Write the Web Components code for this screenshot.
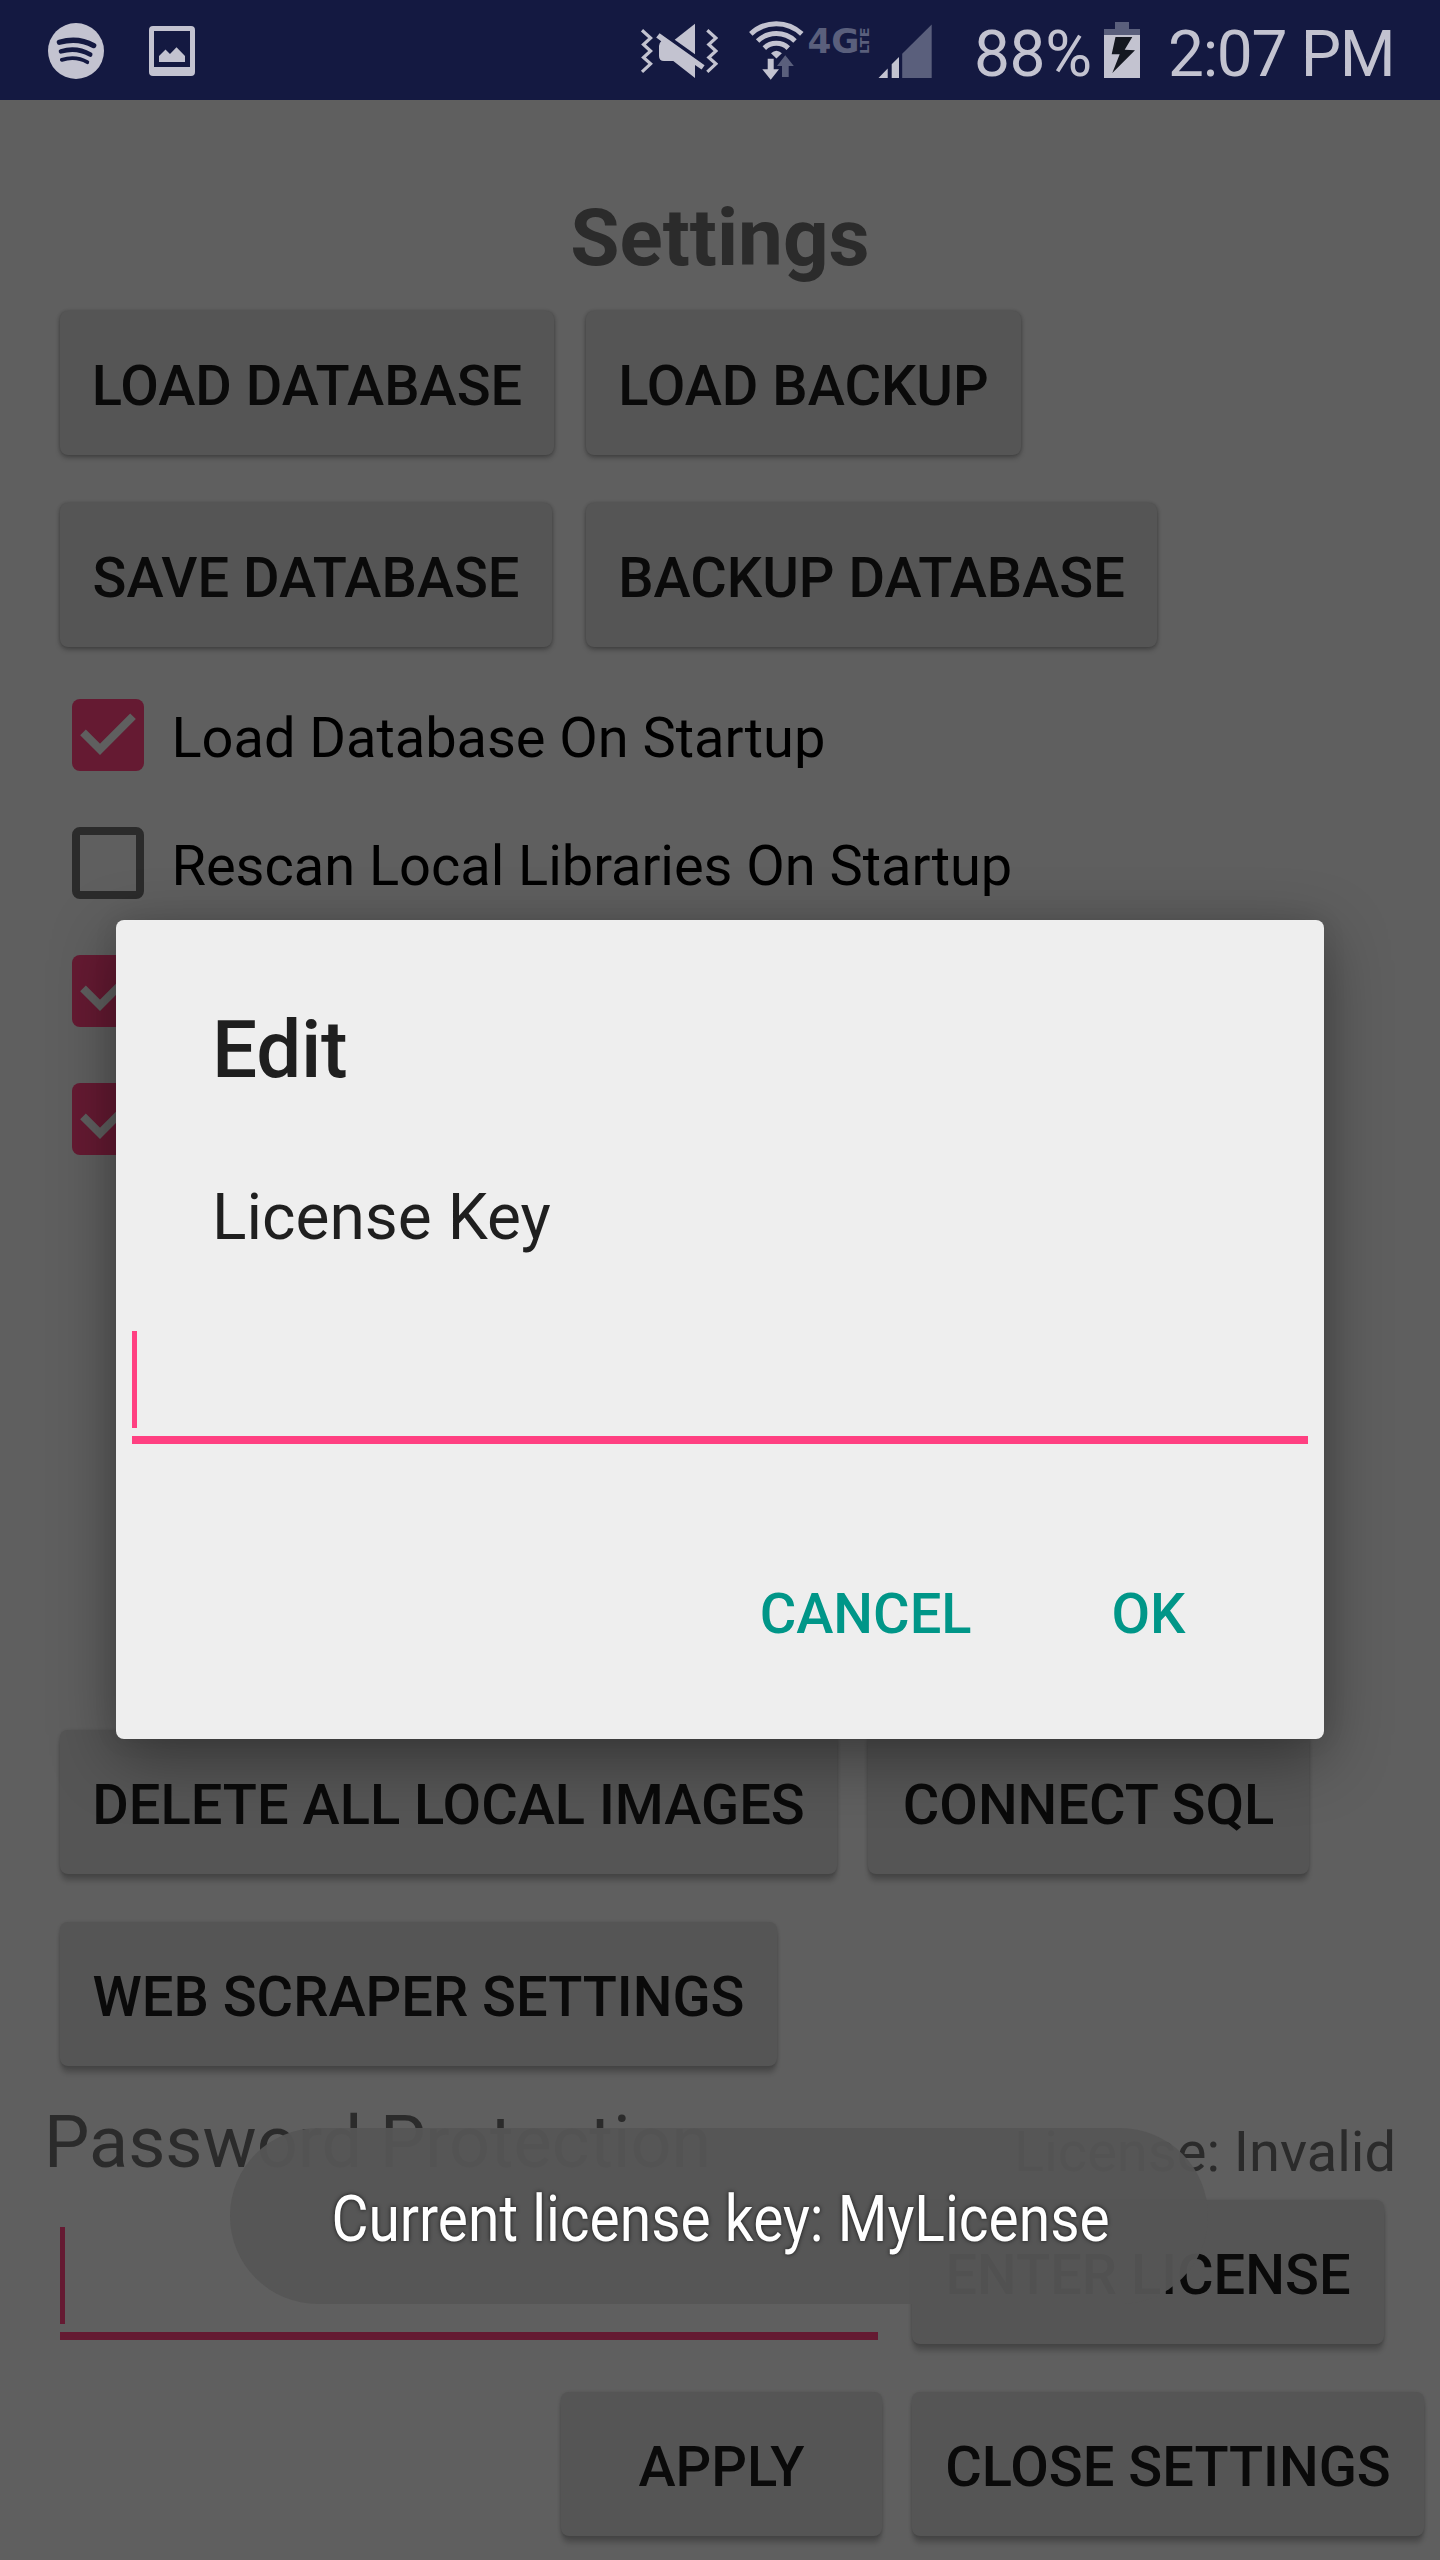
<!DOCTYPE html>
<html lang="en">
<head>
<meta charset="utf-8">
<title>Settings</title>
<style>
html,body{margin:0;padding:0}
body{width:1440px;height:2560px;overflow:hidden;font-family:Roboto,"Noto Sans",sans-serif;background:#5f5f5f}
</style>
</head>
<body>
<settings-app></settings-app>
<script>
function define(name, html) {
  const t = document.createElement('template');
  t.innerHTML = html;
  customElements.define(name, class extends HTMLElement {
    constructor() {
      super();
      this.attachShadow({ mode: 'open' }).append(t.content.cloneNode(true));
    }
  });
}

define('status-bar', `
<style>
:host{display:flex;align-items:flex-start;height:100px;background:#141941;color:#c3c3d0;font-size:64px;line-height:100px;white-space:nowrap}
svg{display:block;flex:none;height:100px}
.left{display:flex;flex:1}
.right{display:flex}
.t{font-weight:400;height:100px;line-height:109px;flex:none}
.pct{width:127px;margin-left:32px;letter-spacing:-.4px}
.time{margin-left:27px;width:272px;letter-spacing:-1.3px}
</style>
<div class="left">
<svg width="149" viewBox="0 0 149 100"><circle cx="76" cy="51" r="28" fill="#c3c3d0"/><g fill="none" stroke="#141941" stroke-linecap="round"><path stroke-width="5.3" d="M59.4 42.3Q78 37 93.7 45.6"/><path stroke-width="4.6" d="M61 51.4Q76.5 46.7 90.2 54.6"/><path stroke-width="3.8" d="M61.8 59.8Q76 55.7 87.3 62.2"/></g></svg>
<svg width="46" viewBox="149 0 46 100" fill="#c3c3d0"><path fill-rule="evenodd" d="M153 26H191Q195 26 195 30V72Q195 76 191 76H153Q149 76 149 72V30Q149 26 153 26ZM154 31V67H190V31Z"/><path d="M159 62V56L165.5 49.5L170 54L176.5 47.3L185 56V62Z"/></svg>
</div>
<div class="right">
<svg width="78" viewBox="640 0 78 100"><g fill="none" stroke="#c3c3d0" stroke-width="3.2"><path d="M642 30.2L650.6 38L643.5 44.5L650.6 51L643.5 57.5L650.6 63.8L642 71.8"/><path d="M707.3 30.2L715.9 38L708.8 44.5L715.9 51L708.8 57.5L715.9 63.8L707.3 71.8"/></g><g fill="#c3c3d0"><path d="M674.7 39.7L695 23.7V54.3Z"/><path d="M656.2 37.6L659.6 33.2L704.6 65.2L701.6 69.6L695 65V78L673.3 61H664Q659 61 659 56V46Q659 43 661.2 41.2Z"/></g></svg>
<svg width="88" viewBox="718 0 88 100"><g fill="none" stroke="#c3c3d0" stroke-width="5"><path d="M750.8 33.9A37 37 0 0 1 801.8 33.9"/><path d="M757.6 41A27.2 27.2 0 0 1 795 41"/><path d="M764.3 48.1A17.4 17.4 0 0 1 788.3 48.1"/></g><path fill="#c3c3d0" d="M771 53.3Q776.3 48.3 781.9 53.3L776.4 58.6Z"/><path fill="#c3c3d0" d="M767.7 58.7H773.7V69.3H779L770.7 79.8L762.3 69.3H767.7Z"/><path fill="#5a5f7c" d="M785.3 55.3L793.8 66H788.7V77H782V66H777Z"/></svg>
<svg width="66" viewBox="806 0 66 100" fill="#5a5f7c" font-family="'DejaVu Sans'" font-weight="bold"><text x="807.5" y="53.3" font-size="33.5" textLength="52" lengthAdjust="spacingAndGlyphs">4G</text><text transform="translate(869 54) rotate(-90)" font-size="12.8" textLength="26.5" lengthAdjust="spacingAndGlyphs">LTE</text></svg>
<svg width="70" viewBox="872 0 70 100"><path fill="#c3c3d0" d="M878.5 78L887.7 68.6V78ZM891.7 64.2L899 57V78H891.7Z"/><path fill="#5a5f7c" d="M902.2 53.7L931.7 24.5V78H902.2Z"/></svg>
<span class="t pct">88%</span>
<svg width="40" viewBox="1101 0 40 100"><path fill="#5a5f7c" d="M1115 22H1129V29H1140V35H1104V29H1115Z"/><path fill="#c3c3d0" d="M1104 35H1140V78H1104Z"/><path fill="#141820" d="M1115.5 37H1132.3L1124.7 49.8L1135 50.3L1112.3 73L1119.7 54.3H1111.7Z"/></svg>
<span class="t time">2:07 PM</span>
</div>`);

define('md-button', `
<style>
:host{display:block;flex:none;box-sizing:border-box;height:144px;border-radius:8px;background:#555;color:#0a0a0a;font-size:56px;font-weight:500;line-height:150px;text-align:center;white-space:nowrap;box-shadow:0 3px 5px rgba(0,0,0,.25),0 0 3px 1px rgba(0,0,0,.12)}
:host([low]){box-shadow:0 8px 5px -1px rgba(0,0,0,.2),0 1px 3px 1px rgba(0,0,0,.12)}
</style><slot></slot>`);

define('check-row', `
<style>
:host{display:flex;align-items:flex-start;height:72px;gap:27.5px;color:#000;font-size:56px;white-space:nowrap}
svg{flex:none;display:block}
.off{display:none}
:host([unchecked]) .off{display:block}
:host([unchecked]) .on{display:none}
span{line-height:78px;letter-spacing:-.04px}
</style>
<svg class="on" width="72" height="72"><rect width="72" height="72" rx="8" fill="#651a32"/><path d="M11 33.4L28 50.4L61 17.2" fill="none" stroke="#5f5f5f" stroke-width="8"/></svg>
<svg class="off" width="72" height="72"><rect x="4" y="4" width="64" height="64" rx="4" fill="none" stroke="#2b2b2b" stroke-width="8"/></svg>
<span><slot></slot></span>`);

define('text-field', `
<style>
:host{display:flex;flex-direction:column;justify-content:space-between;height:113px;--accent:#ff4081}
i{display:block;width:5px;height:97px;background:var(--accent)}
b{display:block;height:8.5px;background:var(--accent)}
</style><i></i><b></b>`);

define('edit-dialog', `
<style>
:host{display:flex;flex-direction:column;box-sizing:border-box;width:1208px;height:819px;border-radius:8px;background:#eee;color:#1f1f1f;padding:83px 16px 0;box-shadow:0 18px 64px rgba(0,0,0,.38),0 0 24px rgba(0,0,0,.08)}
h2{margin:0 80px;font-size:80px;font-weight:500;line-height:94px;letter-spacing:-.3px}
p{margin:83px 80px 75px;font-size:64px;line-height:76px}
.actions{display:flex;justify-content:flex-end;gap:140px;margin:137px 122.5px 0 0;color:#009688;font-size:56px;font-weight:500;line-height:66px}
</style>
<h2>Edit</h2><p>License Key</p><text-field></text-field>
<div class="actions"><span>CANCEL</span><span>OK</span></div>`);

define('toast-message', `
<style>
:host{display:flex;justify-content:center;width:978px;height:176px;border-radius:88px;background:rgba(85,85,85,.95);color:#fff;font-size:64px;line-height:184px;white-space:nowrap;text-shadow:0 0 5px rgba(0,0,0,.75)}
span{display:block;padding-left:3px;transform:scaleX(.889)}
</style><span><slot></slot></span>`);

define('settings-page', `
<style>
:host{display:flex;flex-direction:column;height:2460px;box-sizing:border-box;padding:91px 0 24px 60px;color:#2b2b2b;background:#5f5f5f}
h1{margin:0 0 26px -60px;text-align:center;font-size:80px;font-weight:700;line-height:94px}
.row{display:flex;gap:32px;margin-bottom:48px}
.checks{display:flex;flex-direction:column;gap:56px;margin:4px 0 auto 12px}
.labels{display:flex;justify-content:space-between;height:134px;margin:-48px 44px 0 -16px;white-space:nowrap}
.pw{font-size:72px;line-height:84px;padding-top:35px}
.lic{font-size:56px;line-height:66px;padding-top:53px}
text-field{--accent:#651a32;width:818px;margin-top:27px;margin-right:2px}
.end{margin:0 16px 0 0;justify-content:flex-end;gap:30px}
</style>
<h1>Settings</h1>
<div class="row"><md-button style="width:494px">LOAD DATABASE</md-button><md-button style="width:435px">LOAD BACKUP</md-button></div>
<div class="row" style="gap:34px"><md-button style="width:492px">SAVE DATABASE</md-button><md-button style="width:571px">BACKUP DATABASE</md-button></div>
<div class="checks"><check-row>Load Database On Startup</check-row><check-row unchecked>Rescan Local Libraries On Startup</check-row><check-row></check-row><check-row></check-row></div>
<div class="row" style="gap:31px"><md-button low style="width:777px">DELETE ALL LOCAL IMAGES</md-button><md-button low style="width:441px">CONNECT SQL</md-button></div>
<div class="row"><md-button low style="width:717px">WEB SCRAPER SETTINGS</md-button></div>
<div class="labels"><span class="pw">Password Protection</span><span class="lic">License: Invalid</span></div>
<div class="row"><text-field></text-field><md-button low style="width:472px">ENTER LICENSE</md-button></div>
<div class="row end"><md-button low style="width:321px">APPLY</md-button><md-button low style="width:512px">CLOSE SETTINGS</md-button></div>`);

define('settings-app', `
<style>
:host{display:block;position:relative;width:1440px;height:2560px;overflow:hidden}
edit-dialog{position:absolute;left:116px;top:920px}
toast-message{position:absolute;left:230px;top:2128px}
</style>
<status-bar></status-bar>
<settings-page></settings-page>
<edit-dialog></edit-dialog>
<toast-message>Current license key: MyLicense</toast-message>`);
</script>
</body>
</html>
